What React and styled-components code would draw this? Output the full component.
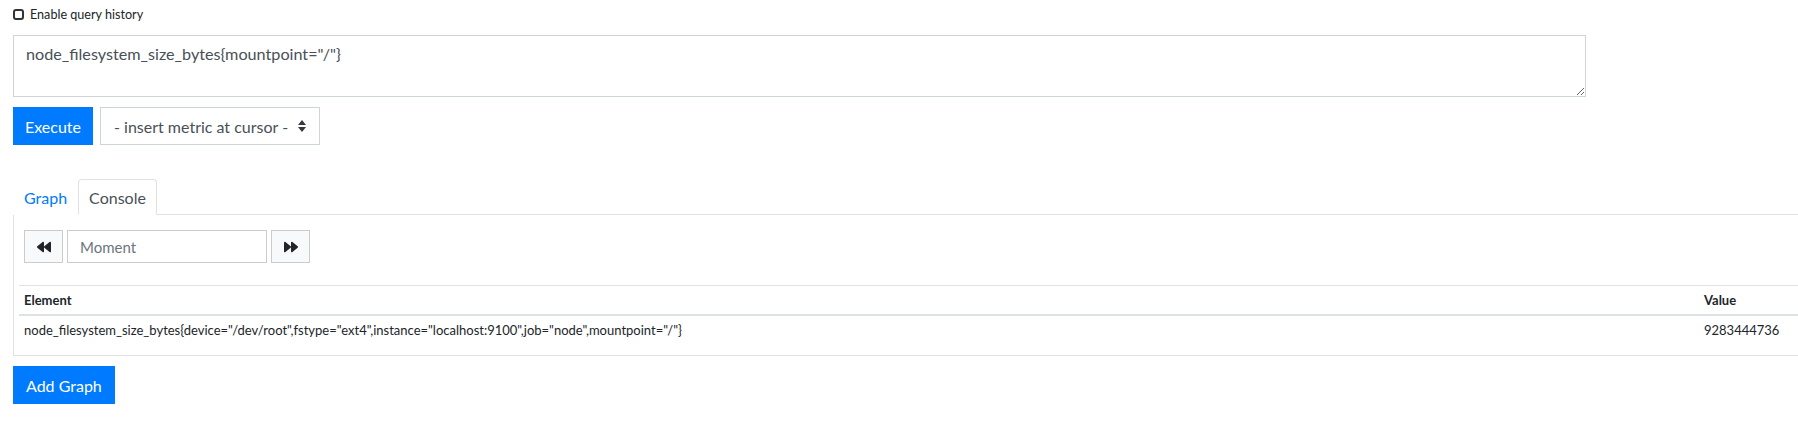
import React from 'react';
import styled, { createGlobalStyle } from 'styled-components';
import { FaBackward, FaForward } from 'react-icons/fa';

const GlobalStyle = createGlobalStyle`
  html, body {
    margin: 0;
    padding: 0;
    overflow: hidden;
    background: #ffffff;
  }
  body {
    font-family: Lato, 'Open Sans', sans-serif;
    font-size: 16px;
    color: #212529;
  }
`;

export default function App() {
  return (
    <>
      <GlobalStyle />
      <Page>
        <HistoryToggle>
          <CheckBox />
          Enable query history
        </HistoryToggle>
        <QueryInput defaultValue={'node_filesystem_size_bytes{mountpoint="/"}'} />
        <ActionRow>
          <PrimaryButton>Execute</PrimaryButton>
          <MetricSelect>
            - insert metric at cursor -
            <Carets />
          </MetricSelect>
        </ActionRow>
        <Tabs>
          <Tab>Graph</Tab>
          <Tab active>Console</Tab>
        </Tabs>
        <TabPanel>
          <TimeNav>
            <NavButton><FaBackward /></NavButton>
            <MomentInput placeholder="Moment" />
            <NavButton><FaForward /></NavButton>
          </TimeNav>
          <ResultTable>
            <thead>
              <tr>
                <HeadCell wide>Element</HeadCell>
                <HeadCell>Value</HeadCell>
              </tr>
            </thead>
            <tbody>
              <tr>
                <Cell>
                  {'node_filesystem_size_bytes{device="/dev/root",fstype="ext4",instance="localhost:9100",job="node",mountpoint="/"}'}
                </Cell>
                <Cell>9283444736</Cell>
              </tr>
            </tbody>
          </ResultTable>
        </TabPanel>
        <AddGraph>Add Graph</AddGraph>
      </Page>
    </>
  );
}

function Carets() {
  return (
    <svg width="8" height="12" viewBox="0 0 8 12">
      <path d="M4 0 L8 5 L0 5 Z M0 7 L8 7 L4 12 Z" fill="#343a40" />
    </svg>
  );
}

const Page = styled.div`
  padding: 5px 0 0 13px;
  display: flex;
  flex-direction: column;
  align-items: flex-start;
`;

const HistoryToggle = styled.label`
  display: flex;
  align-items: center;
  gap: 6px;
  font-size: 12.6px;
  height: 19px;
  color: #212529;
`;

const CheckBox = styled.span`
  box-sizing: border-box;
  width: 11px;
  height: 11px;
  border: 2px solid #333333;
  border-radius: 3px;
`;

const QueryInput = styled.textarea`
  box-sizing: border-box;
  margin-top: 11px;
  width: 1573px;
  height: 62px;
  padding: 6px 12px;
  border: 1px solid #ced4da;
  border-radius: 0;
  font-family: inherit;
  font-size: 16.2px;
  line-height: 24px;
  color: #495057;
  resize: vertical;
  outline: none;
`;

const ActionRow = styled.div`
  display: flex;
  gap: 7px;
  margin-top: 10px;
`;

const PrimaryButton = styled.button`
  height: 38px;
  padding: 0 11px;
  border: 1px solid #007bff;
  background: #007bff;
  color: #ffffff;
  font-family: inherit;
  font-size: 16px;
  border-radius: 0;
`;

const MetricSelect = styled.div`
  box-sizing: border-box;
  width: 220px;
  height: 38px;
  padding: 0 13px;
  display: flex;
  align-items: center;
  justify-content: space-between;
  border: 1px solid #ced4da;
  color: #495057;
  font-size: 16px;
`;

const Tabs = styled.div`
  margin-top: 34px;
  display: flex;
  width: 1830px;
  border-bottom: 1px solid #dee2e6;
`;

const Tab = styled.div`
  height: 34px;
  padding: 0 10px;
  display: flex;
  align-items: center;
  margin-bottom: -1px;
  border: 1px solid ${(p) => (p.active ? '#dee2e6' : 'transparent')};
  border-bottom-color: ${(p) => (p.active ? '#ffffff' : 'transparent')};
  border-radius: 4px 4px 0 0;
  background: #ffffff;
  color: ${(p) => (p.active ? '#495057' : '#007bff')};
  font-size: 16px;
`;

const TabPanel = styled.div`
  box-sizing: border-box;
  width: 1830px;
  padding: 15px 0 11px 5px;
  border: 1px solid #dee2e6;
  border-top: none;
`;

const TimeNav = styled.div`
  display: flex;
  gap: 4px;
  margin-left: 5px;
  margin-bottom: 22px;
`;

const NavButton = styled.div`
  box-sizing: border-box;
  width: 39px;
  height: 33px;
  display: flex;
  align-items: center;
  justify-content: center;
  background: #f8f9fa;
  border: 1px solid #cccccc;
  color: #212529;
  font-size: 14px;
`;

const MomentInput = styled.input`
  box-sizing: border-box;
  width: 200px;
  height: 33px;
  padding: 0 12px;
  border: 1px solid #cccccc;
  font-family: inherit;
  font-size: 15px;
  color: #495057;
  outline: none;

  &::placeholder {
    color: #6c757d;
  }
`;

const ResultTable = styled.table`
  width: 100%;
  border-collapse: collapse;
  font-size: 13px;
`;

const HeadCell = styled.th`
  text-align: left;
  padding: 5px;
  line-height: 18px;
  width: ${(p) => (p.wide ? '1670px' : 'auto')};
  border-top: 1px solid #dee2e6;
  border-bottom: 2px solid #dee2e6;
  font-weight: 700;
`;

const Cell = styled.td`
  padding: 5px;
  line-height: 18px;
`;

const AddGraph = styled(PrimaryButton)`
  margin-top: 10px;
  padding: 0 12px;
`;
